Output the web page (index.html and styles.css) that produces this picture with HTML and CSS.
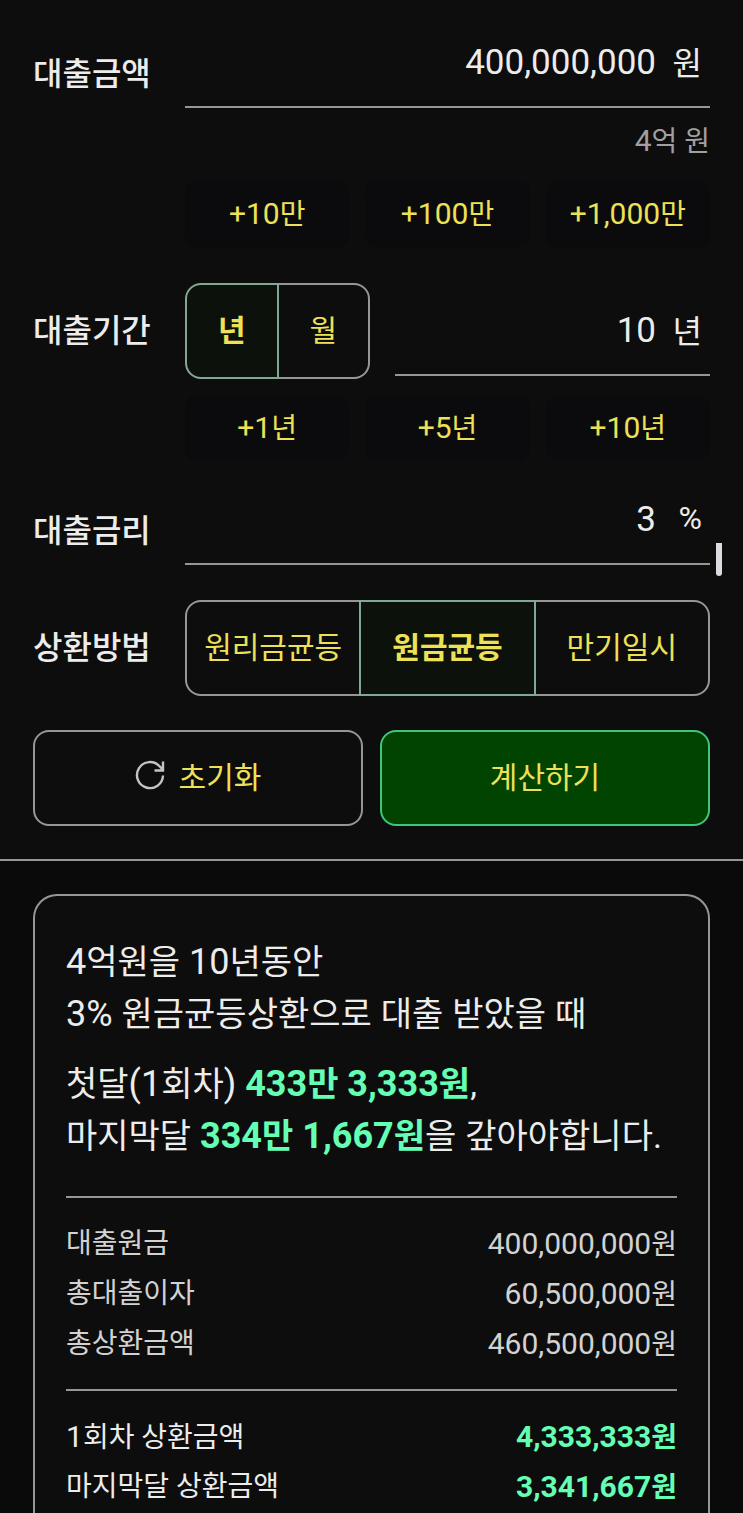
FILE: index.html
```
<!DOCTYPE html>
<html lang="ko">
<head>
  <meta charset="UTF-8" />
  <meta name="viewport" content="width=device-width, initial-scale=1.0"/>
  <title>대출 계산기</title>
  <link rel="stylesheet" href="styles.css">
</head>
<body>
  <form class="loan-form">
    <div class="row">
      <label class="row-label tall" for="amount">대출금액</label>
      <div class="row-body">
        <div class="field">
          <input type="text" id="amount" value="400,000,000">
          <span class="unit">원</span>
        </div>
        <p class="hint"><span class="num">4</span>억 원</p>
        <div class="quick">
          <button type="button"><span class="num">+10</span>만</button>
          <button type="button"><span class="num">+100</span>만</button>
          <button type="button"><span class="num">+1,000</span>만</button>
        </div>
      </div>
    </div>

    <div class="row term">
      <label class="row-label" for="period">대출기간</label>
      <div class="row-body">
        <div class="period">
          <div class="segment">
            <button type="button" class="active">년</button>
            <button type="button">월</button>
          </div>
          <div class="field">
            <input type="text" id="period" value="10">
            <span class="unit">년</span>
          </div>
        </div>
        <div class="quick">
          <button type="button"><span class="num">+1</span>년</button>
          <button type="button"><span class="num">+5</span>년</button>
          <button type="button"><span class="num">+10</span>년</button>
        </div>
      </div>
    </div>

    <div class="row rate">
      <label class="row-label tall" for="rate">대출금리</label>
      <div class="row-body">
        <div class="field">
          <input type="text" id="rate" value="3">
          <span class="unit">%</span>
        </div>
      </div>
    </div>

    <div class="row method">
      <span class="row-label" id="method-label">상환방법</span>
      <div class="segment row-body" role="group" aria-labelledby="method-label">
        <button type="button">원리금균등</button>
        <button type="button" class="active">원금균등</button>
        <button type="button">만기일시</button>
      </div>
    </div>

    <div class="actions">
      <button type="reset" class="reset">
        <svg class="reset-icon" viewBox="0 0 30 30" aria-hidden="true">
          <path d="M28 15.5A13 13 0 1 1 24.6 6.3L28 10M28 1.5V10.5H19.5"/>
        </svg>
        초기화
      </button>
      <button type="button" class="submit">계산하기</button>
    </div>
  </form>

  <main class="result">
    <section class="card">
      <p class="summary"><span class="num">4</span>억원을<span class="num"> 10</span>년동안<br><span class="num">3% </span>원금균등상환으로<span class="num"> </span>대출<span class="num"> </span>받았을<span class="num"> </span>때</p>
      <p class="summary">첫달<span class="num">(1</span>회차<span class="num">) </span><strong><span class="num">433</span>만<span class="num"> 3,333</span>원</strong>,<br>마지막달<span class="num"> </span><strong><span class="num">334</span>만<span class="num"> 1,667</span>원</strong>을<span class="num"> </span>갚아야합니다.</p>

      <dl class="details">
        <div><dt>대출원금</dt><dd><span class="num">400,000,000</span>원</dd></div>
        <div><dt>총대출이자</dt><dd><span class="num">60,500,000</span>원</dd></div>
        <div><dt>총상환금액</dt><dd><span class="num">460,500,000</span>원</dd></div>
      </dl>

      <dl class="details payments">
        <div><dt><span class="num">1</span>회차 상환금액</dt><dd><span class="num">4,333,333</span>원</dd></div>
        <div><dt>마지막달 상환금액</dt><dd><span class="num">3,341,667</span>원</dd></div>
      </dl>
    </section>
  </main>

  <div class="scroll-thumb"></div>
</body>
</html>
```
FILE: styles.css
```
* {
  box-sizing: border-box;
}

body {
  margin: 0;
  position: relative;
  display: flex;
  flex-direction: column;
  min-height: 100vh;
  background: #0d0d0d;
  color: #ececec;
  font-family: Roboto, 'Noto Sans CJK KR', sans-serif;
  font-size: 28px;
}

p, dl, dd {
  margin: 0;
}

button, input {
  font-family: inherit;
  color: inherit;
}

button {
  padding: 0 0 6px;
  border: 2px solid #969696;
  background: none;
  color: #ede157;
  font-size: 30px;
  cursor: pointer;
}

.num {
  font-size: 30px;
}

/* form */
.loan-form {
  padding: 18px 33px 33px;
  border-bottom: 2px solid #969696;
}

.row {
  display: flex;
  margin-bottom: 36px;
}

.row-label {
  display: flex;
  align-items: center;
  flex: none;
  width: 152px;
  height: 96px;
  padding-bottom: 6px;
  font-size: 32px;
  font-weight: 500;
}

.row-label.tall {
  height: 112px;
}

.row-body {
  flex: 1;
  min-width: 0;
}

.field {
  display: flex;
  align-items: center;
  gap: 16px;
  flex: 1;
  min-width: 0;
  height: 90px;
  padding-right: 8px;
  border-bottom: 2px solid #969696;
}

.field input {
  flex: 1;
  min-width: 0;
  height: 60px;
  padding: 0;
  border: none;
  outline: none;
  background: none;
  font-size: 35px;
  text-align: right;
}

.unit {
  width: 30px;
  padding-bottom: 2px;
  font-size: 32px;
  text-align: right;
}

.hint {
  margin: 12px 0 18px;
  line-height: 42px;
  text-align: right;
  color: #a0a0a0;
}

.quick {
  display: grid;
  grid-template-columns: repeat(3, 1fr);
  gap: 16px;
}

.quick button {
  height: 66px;
  padding-bottom: 4px;
  border: none;
  border-radius: 12px;
  background: #0b0b0d;
  font-size: 28px;
}

.period {
  display: flex;
  align-items: center;
  gap: 25px;
  margin-bottom: 16px;
}

.period .segment {
  width: 185px;
}

.segment {
  display: flex;
}

.segment button {
  position: relative;
  flex: 1;
  height: 96px;
}

.segment button + button {
  margin-left: -2px;
}

.segment button:first-child {
  border-radius: 16px 0 0 16px;
}

.segment button:last-child {
  border-radius: 0 16px 16px 0;
}

.segment .active {
  z-index: 1;
  border-color: #83a795;
  background: #0d110c;
  font-weight: 700;
}

.term {
  margin-bottom: 14px;
}

.rate {
  margin-bottom: 13px;
}

.method {
  margin-bottom: 34px;
}

.actions {
  display: flex;
  gap: 17px;
}

.actions button {
  display: flex;
  align-items: center;
  justify-content: center;
  gap: 14px;
  flex: 1;
  height: 96px;
  border-radius: 16px;
}

.actions .submit {
  border-color: #3fc57d;
  background: #004400;
}

.reset-icon {
  width: 30px;
  height: 30px;
  fill: none;
  stroke: #c4c4c4;
  stroke-width: 2.4;
}

/* result */
.result {
  display: flex;
  flex: 1;
  padding: 33px 33px 0;
  background: #0a0a0a;
}

.card {
  flex: 1;
  padding: 40px 31px 0;
  border: 2px solid #969696;
  border-bottom: none;
  border-radius: 24px 24px 0 0;
  background: #0d0d0d;
}

.summary {
  margin-bottom: 18px;
  font-size: 34px;
  line-height: 52px;
}

.summary .num {
  font-size: 36px;
}

.summary strong {
  color: #64ffb4;
}

.details {
  margin-top: 34px;
  padding-top: 21px;
  border-top: 2px solid #969696;
  color: #d2d2d2;
}

.details div {
  display: flex;
  justify-content: space-between;
  height: 50px;
  line-height: 50px;
}

.payments {
  margin-top: 20px;
  color: #ececec;
}

.payments dd {
  color: #64ffb4;
  font-weight: 700;
}

.scroll-thumb {
  position: absolute;
  top: 543px;
  right: 21px;
  width: 6px;
  height: 33px;
  border-radius: 0 0 3px 3px;
  background: #dcdce0;
}
```
